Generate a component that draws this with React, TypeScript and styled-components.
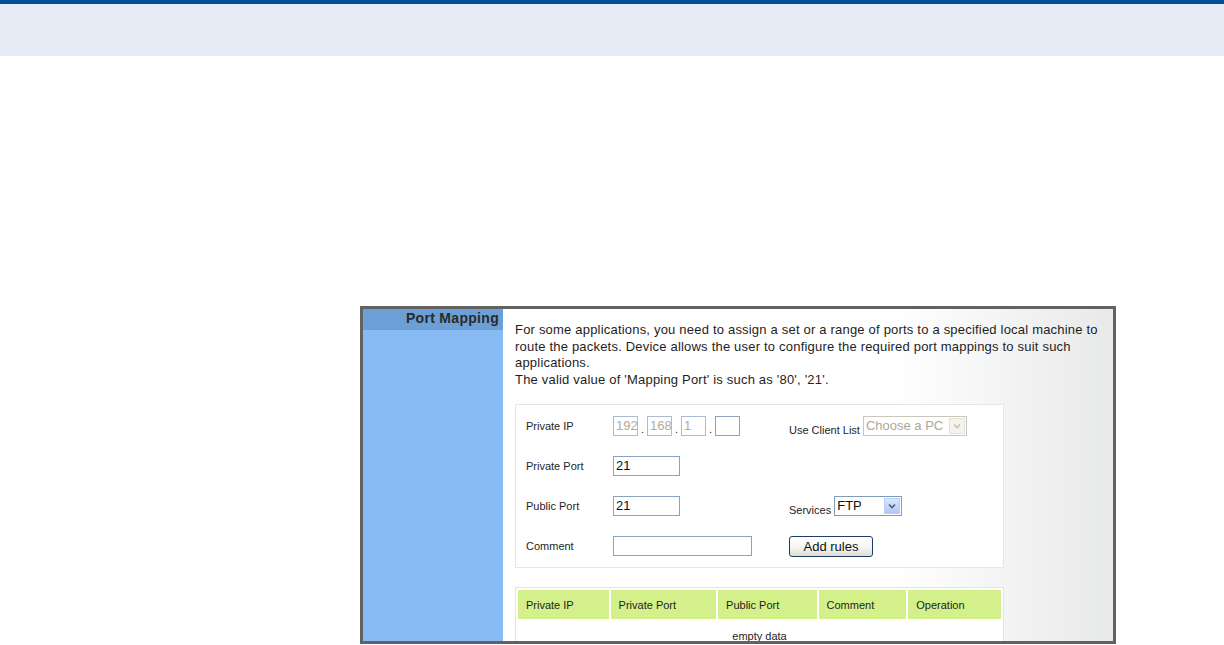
import React from "react";
import styled, { createGlobalStyle } from "styled-components";

const GlobalStyle = createGlobalStyle`
  html, body {
    margin: 0;
    padding: 0;
    background: #ffffff;
    font-family: "Liberation Sans", Arial, sans-serif;
  }
  #root {
    height: 645px;
    overflow: hidden;
  }
`;

const TopStripe = styled.div`
  height: 4px;
  background-color: #004f9c;
`;

const Band = styled.div`
  height: 52px;
  background-color: #e5ecf5;
`;

const Main = styled.main`
  padding: 250px 0 0 360px;
`;

const Frame = styled.div`
  box-sizing: border-box;
  width: 756px;
  height: 338px;
  border: 3px solid #626262;
  display: flex;
  overflow: hidden;
`;

const Sidebar = styled.aside`
  width: 140px;
  flex-shrink: 0;
  background-color: #88bbf4;
`;

const SideTitle = styled.div`
  height: 21px;
  line-height: 19px;
  padding-right: 4px;
  text-align: right;
  background-color: #6c9fd6;
  color: #2a2a2a;
  font-size: 14px;
  font-weight: bold;
  letter-spacing: 0.3px;
`;

const Content = styled.section`
  flex: 1;
  padding: 13px 0 0 12px;
  background: linear-gradient(to right, #ffffff 0%, #ffffff 64%, #e8e9e9 100%);
  color: #1e1e1e;
`;

const Intro = styled.p`
  margin: 0;
  font-size: 13px;
  line-height: 16.5px;
  letter-spacing: 0.2px;
  white-space: nowrap;
`;

const FormBox = styled.div`
  box-sizing: border-box;
  width: 489px;
  margin-top: 16px;
  padding: 1px 0 1px 10px;
  border: 1px solid #e6e6e6;
  background: #ffffff;
  display: grid;
  grid-template-columns: 87px 176px 1fr;
  grid-auto-rows: 40px;
`;

const Label = styled.div`
  display: flex;
  align-items: center;
  font-size: 11px;
  color: #1e1e1e;
`;

const Field = styled.div`
  display: flex;
  align-items: center;
`;

const SideField = styled.div`
  display: flex;
  align-items: flex-end;
  height: 30px;
  align-self: center;
  gap: 3px;
`;

const SideLabel = styled.span`
  font-size: 11px;
  line-height: 13px;
  color: #1e1e1e;
  padding-bottom: 4px;
`;

const TextInput = styled.div<{ $w: number; $disabled?: boolean }>`
  box-sizing: border-box;
  width: ${(p) => p.$w}px;
  height: 20px;
  border: 1px solid ${(p) => (p.$disabled ? "#a9bcd2" : "#8aa3bf")};
  padding: 0 2px;
  font-size: 13px;
  line-height: 18px;
  color: ${(p) => (p.$disabled ? "#b0ab9c" : "#111")};
  background: #fff;
  overflow: hidden;
`;

const Dot = styled.span`
  width: 9px;
  text-align: center;
  font-size: 11px;
  align-self: flex-end;
  line-height: 14px;
  padding-top: 6px;
`;

const IpGroup = styled.div`
  display: flex;
  align-items: center;
`;

const Select = styled.div<{ $w: number; $disabled?: boolean }>`
  box-sizing: border-box;
  width: ${(p) => p.$w}px;
  height: 20px;
  margin-bottom: 5px;
  border: 1px solid ${(p) => (p.$disabled ? "#c9c7ba" : "#7f9db9")};
  display: flex;
  align-items: stretch;
  background: #fff;
  font-size: 13px;
  color: ${(p) => (p.$disabled ? "#aca899" : "#111")};
`;

const SelectText = styled.span`
  flex: 1;
  padding-left: 2px;
  line-height: 18px;
  white-space: nowrap;
  overflow: hidden;
`;

const SelectArrow = styled.span<{ $disabled?: boolean }>`
  width: 16px;
  margin: 1px;
  display: flex;
  align-items: center;
  justify-content: center;
  border: 1px solid ${(p) => (p.$disabled ? "#e4e2da" : "#b9cdf5")};
  box-sizing: border-box;
  background: ${(p) =>
    p.$disabled
      ? "#f4f3ee"
      : "linear-gradient(to bottom, #dce7fd 0%, #c2d4fb 55%, #b3c8f7 100%)"};
`;

const AddButton = styled.button`
  box-sizing: border-box;
  width: 84px;
  height: 21px;
  padding: 0;
  border: 1px solid #1d3d66;
  border-radius: 3px;
  background: linear-gradient(to bottom, #ffffff 0%, #f4f4f0 60%, #dedcd2 100%);
  font-family: "Liberation Sans", Arial, sans-serif;
  font-size: 13px;
  color: #111;
`;

const Table = styled.table`
  margin-top: 19px;
  width: 489px;
  border: 1px solid #dcf3a6;
  border-spacing: 2px;
  font-size: 11px;
  color: #1e1e1e;
  background: #fff;
`;

const HeadCell = styled.th<{ $w: number }>`
  width: ${(p) => p.$w}px;
  height: 29px;
  padding: 0 0 0 8px;
  text-align: left;
  font-weight: normal;
  background-color: #d4f08a;
`;

const EmptyCell = styled.td`
  height: 26px;
  text-align: center;
  padding-top: 9px;
  vertical-align: top;
`;

const Chevron: React.FC<{ color: string }> = ({ color }) => (
  <svg width="8" height="6" viewBox="0 0 8 6">
    <path d="M1 1.5 L4 4.5 L7 1.5" fill="none" stroke={color} strokeWidth="1.6" />
  </svg>
);

const columns = [
  { title: "Private IP", w: 83 },
  { title: "Private Port", w: 98 },
  { title: "Public Port", w: 91 },
  { title: "Comment", w: 80 },
  { title: "Operation", w: 85 },
];

const App: React.FC = () => {
  return (
    <>
      <GlobalStyle />
      <TopStripe />
      <Band />
      <Main>
        <Frame>
          <Sidebar>
            <SideTitle>Port Mapping</SideTitle>
          </Sidebar>
          <Content>
            <Intro>
              For some applications, you need to assign a set or a range of ports to a specified local machine to
              <br />
              route the packets. Device allows the user to configure the required port mappings to suit such
              <br />
              applications.
              <br />
              The valid value of 'Mapping Port' is such as '80', '21'.
            </Intro>

            <FormBox>
              <Label>Private IP</Label>
              <Field>
                <IpGroup>
                  <TextInput $w={25} $disabled>192</TextInput>
                  <Dot>.</Dot>
                  <TextInput $w={25} $disabled>168</TextInput>
                  <Dot>.</Dot>
                  <TextInput $w={25} $disabled>1</TextInput>
                  <Dot>.</Dot>
                  <TextInput $w={25} />
                </IpGroup>
              </Field>
              <SideField>
                <SideLabel>Use Client List</SideLabel>
                <Select $w={104} $disabled>
                  <SelectText>Choose a PC</SelectText>
                  <SelectArrow $disabled>
                    <Chevron color="#c4c2b8" />
                  </SelectArrow>
                </Select>
              </SideField>

              <Label>Private Port</Label>
              <Field>
                <TextInput $w={67}>21</TextInput>
              </Field>
              <div />

              <Label>Public Port</Label>
              <Field>
                <TextInput $w={67}>21</TextInput>
              </Field>
              <SideField>
                <SideLabel>Services</SideLabel>
                <Select $w={68}>
                  <SelectText>FTP</SelectText>
                  <SelectArrow>
                    <Chevron color="#4d6185" />
                  </SelectArrow>
                </Select>
              </SideField>

              <Label>Comment</Label>
              <Field>
                <TextInput $w={139} />
              </Field>
              <Field>
                <AddButton>Add rules</AddButton>
              </Field>
            </FormBox>

            <Table>
              <thead>
                <tr>
                  {columns.map((c) => (
                    <HeadCell key={c.title} $w={c.w}>
                      {c.title}
                    </HeadCell>
                  ))}
                </tr>
              </thead>
              <tbody>
                <tr>
                  <EmptyCell colSpan={5}>empty data</EmptyCell>
                </tr>
              </tbody>
            </Table>
          </Content>
        </Frame>
      </Main>
    </>
  );
};

export default App;
